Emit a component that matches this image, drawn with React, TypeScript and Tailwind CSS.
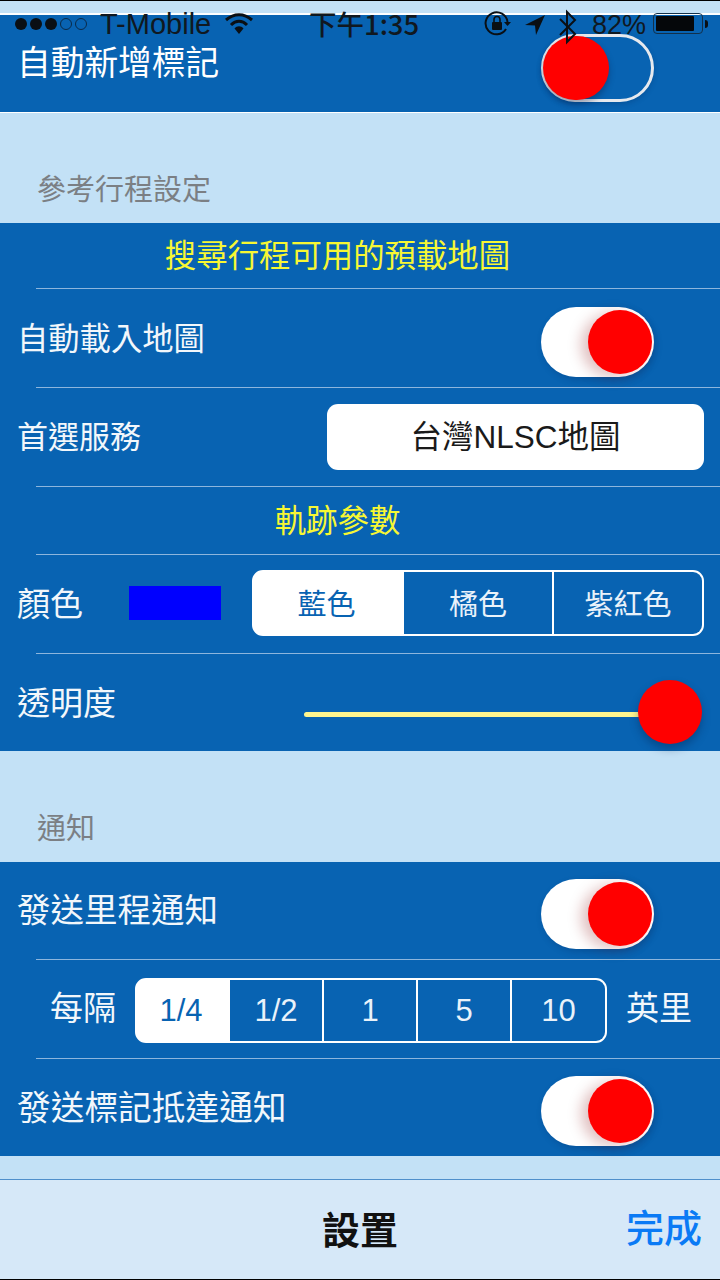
import React from "react";

const cjk = '"Noto Sans CJK TC", "Liberation Sans", sans-serif';
const latin = "font-['Liberation_Sans','Noto_Sans_CJK_TC',sans-serif]";

function Sep() {
  return <div className="ml-[36px] h-px bg-[#8db6dd]" />;
}

function Toggle({ on, className }: { on: boolean; className: string }) {
  return on ? (
    <div className={`relative h-[70px] w-[113px] shrink-0 rounded-full bg-white shadow-[2px_3px_6px_rgba(0,40,90,0.25)] ${className}`}>
      <div className="absolute left-[47px] top-[3px] h-[64px] w-[64px] rounded-full bg-[#ff0000] shadow-[-7px_3px_14px_rgba(130,0,0,0.25)]" />
    </div>
  ) : (
    <div className={`relative h-[68px] w-[113px] shrink-0 rounded-full border-[3px] border-[#e6e9ee] shadow-[0_2px_5px_rgba(0,40,90,0.25)] ${className}`}>
      <div className="absolute left-[-1px] top-[-1px] h-[64px] w-[66px] rounded-full bg-[#ff0000] shadow-[0_4px_6px_rgba(0,20,60,0.35)]" />
    </div>
  );
}

function Seg({ items, widths, textClass }: { items: string[]; widths: string[]; textClass: string }) {
  return (
    <div className="flex h-full overflow-hidden rounded-[11px] border-2 border-white bg-white">
      {items.map((t, i) => (
        <div
          key={t}
          className={`flex items-center justify-center ${textClass} ${widths[i]} ${
            i === 0 ? "bg-white pr-[3px] text-[#0863b2]" : "border-l-2 border-white bg-[#0863b2] text-[#e9f2fa]"
          }`}
        >
          {t}
        </div>
      ))}
    </div>
  );
}

function StatusBar() {
  return (
    <div className={`absolute left-0 top-[6px] flex h-[36px] w-[720px] items-center text-[#101820] ${latin}`}>
      <div className="ml-[15px] flex items-center gap-[3px]">
        {[0, 1, 2].map((i) => (
          <div key={i} className="h-[12px] w-[12px] rounded-full bg-[#0a0f14]" />
        ))}
        {[0, 1].map((i) => (
          <div key={i} className="h-[12px] w-[12px] rounded-full border border-[#0a2a48]" />
        ))}
      </div>
      <span className="ml-[13px] text-[29px] leading-none">T-Mobile</span>
      <svg className="ml-[13px]" width="30" height="22" viewBox="0 0 30 22">
        <path d="M2 7 C10 0 20 0 28 7" fill="none" stroke="#0a0f14" strokeWidth="3" />
        <path d="M7 12 C12 7 18 7 23 12" fill="none" stroke="#0a0f14" strokeWidth="3" />
        <path d="M10.5 15.5 C13 12.5 17 12.5 19.5 15.5 L15 21 Z" fill="#0a0f14" />
      </svg>
      <span
        className="absolute left-[309px] top-[1px] text-[27.5px] font-medium leading-[32px]"
        style={{ fontFamily: cjk }}
      >
        下午1:35
      </span>
      <svg className="absolute left-[484px] top-[5px]" width="28" height="26" viewBox="0 0 28 26">
        <path d="M22 18 A11 11 0 1 1 23.5 11" fill="none" stroke="#0a0f14" strokeWidth="2" />
        <path d="M20 11 L27 11 L23.5 15 Z" fill="#0a0f14" />
        <rect x="8" y="11" width="10" height="8" rx="1" fill="#0a0f14" />
        <path d="M10 11 V8.5 a3 3 0 0 1 6 0 V11" fill="none" stroke="#0a0f14" strokeWidth="1.6" />
      </svg>
      <svg className="absolute left-[524px] top-[8px]" width="22" height="22" viewBox="0 0 22 22">
        <path d="M21 1 L1 11 L11 11.5 L12 21 Z" fill="#0a0f14" />
      </svg>
      <svg className="absolute left-[557px] top-[3px]" width="22" height="36" viewBox="0 0 22 36">
        <path d="M3 10 L18 25 L10 33 V3 L18 11 L3 26" fill="none" stroke="#0a0f14" strokeWidth="2" />
      </svg>
      <span className="absolute left-[592px] top-[3px] text-[27px] leading-[32px]">82%</span>
      <div className="absolute left-[653px] top-[7px] flex items-center">
        <div className="h-[21px] w-[50px] rounded-[4px] border border-[#12304a] p-[2px]">
          <div className="h-full w-[38px] rounded-[1px] bg-[#05070a]" />
        </div>
        <div className="ml-[2px] h-[8px] w-[3px] rounded-r-full bg-[#0a0f14]" />
      </div>
    </div>
  );
}

export default function App() {
  return (
    <div
      className="relative flex h-[1280px] w-[720px] flex-col overflow-hidden bg-[#c3e1f6]"
      style={{ fontFamily: cjk }}
    >
      <div className="h-[15px] shrink-0 border-t border-black border-b-2 border-b-white" />
      <div className="flex h-[98px] shrink-0 items-center justify-between border-b border-white bg-[#0863b2] pl-[17px] pr-[66px] text-[33.7px] text-white">
        <span className="mb-[4px]">自動新增標記</span>
        <Toggle on={false} className="mt-[8px]" />
      </div>

      <div className="flex h-[110px] shrink-0 items-end pb-[16px] pl-[37px] text-[29px] leading-[40px] text-[#7b7f84]">
        參考行程設定
      </div>

      <div className="shrink-0 bg-[#0863b2] text-[33px] text-[#f2f7fb]">
        <div className="flex h-[65px] items-center justify-center pb-[4px] pr-[45px] text-[31.4px] text-[#f7f733]">搜尋行程可用的預載地圖</div>
        <Sep />
        <div className="flex h-[98px] items-center justify-between pl-[17px] pr-[66px]">
          <span className="mb-[2px] text-[31.3px]">自動載入地圖</span>
          <Toggle on className="mt-[8px]" />
        </div>
        <Sep />
        <div className="flex h-[98px] items-center justify-between pl-[17px] pr-[16px]">
          <span className="mb-[4px] text-[31px]">首選服務</span>
          <div className={`flex h-[66px] w-[377px] items-center justify-center rounded-[11px] bg-white pt-[2px] text-[31.5px] text-[#1a1a1a] ${latin}`}>
            台灣NLSC地圖
          </div>
        </div>
        <Sep />
        <div className="flex h-[67px] items-center justify-center pb-[4px] pr-[45px] text-[31.4px] text-[#f7f733]">軌跡參數</div>
        <Sep />
        <div className="flex h-[98px] items-center pb-[2px] pl-[17px] pr-[16px]">
          <span className="w-[112px]">顏色</span>
          <div className="h-[34px] w-[92px] bg-[#0000ff]" />
          <div className="ml-[31px] h-[66px] w-[452px]">
            <Seg items={["藍色", "橘色", "紫紅色"]} widths={["w-[148px]", "w-[150px]", "flex-1"]} textClass="text-[29px]" />
          </div>
        </div>
        <Sep />
        <div className="relative flex h-[97px] items-center pl-[17px]">
          <span className="mb-[2px]">透明度</span>
          <div className="absolute left-[304px] top-[58px] h-[5px] w-[340px] rounded-full bg-[#fff68f]" />
          <div className="absolute left-[638px] top-[26px] h-[64px] w-[64px] rounded-full bg-[#ff0000] shadow-[0_5px_9px_rgba(0,30,70,0.35)]" />
        </div>
      </div>

      <div className="flex h-[111px] shrink-0 items-end pb-[16px] pl-[37px] text-[29px] leading-[40px] text-[#7b7f84]">
        通知
      </div>

      <div className="shrink-0 bg-[#0863b2] text-[33px] text-[#f2f7fb]">
        <div className="flex h-[97px] items-center justify-between pl-[17px] pr-[66px]">
          <span className="mb-[4px] text-[33.5px]">發送里程通知</span>
          <Toggle on className="mt-[7px]" />
        </div>
        <Sep />
        <div className="flex h-[98px] items-center pl-[50px]">
          <span className="mb-[4px]">每隔</span>
          <div className={`ml-[19px] mt-[2px] h-[65px] w-[472px] ${latin}`}>
            <Seg
              items={["1/4", "1/2", "1", "5", "10"]}
              widths={["w-[91px]", "w-[94px]", "w-[94px]", "w-[94px]", "flex-1"]}
              textClass="pt-[2px] text-[31px]"
            />
          </div>
          <span className="mb-[4px] ml-[19px]">英里</span>
        </div>
        <Sep />
        <div className="flex h-[97px] items-center justify-between pl-[17px] pr-[66px]">
          <span className="mb-[2px] text-[33.7px]">發送標記抵達通知</span>
          <Toggle on className="mt-[7px]" />
        </div>
      </div>

      <div className="h-[23px] shrink-0" />

      <div className="relative flex h-[101px] shrink-0 items-center justify-center border-t border-[#4f8fcb] border-b border-b-black bg-[#d6e8f8] pb-[5px]">
        <span className="text-[38px] font-bold text-[#111]">設置</span>
        <span className="absolute right-[18px] top-[24px] text-[38px] font-medium leading-[44px] text-[#0a7af5]">完成</span>
      </div>

      <StatusBar />
    </div>
  );
}
